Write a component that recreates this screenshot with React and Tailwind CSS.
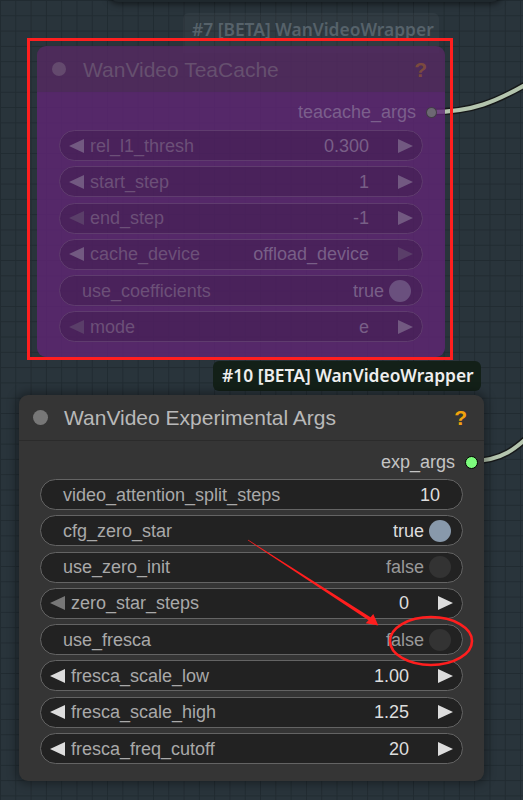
import React from "react";

// colour sets for the two node states
const dark = {
  node: "bg-[#353535] shadow-[0_0_10px_3px_rgba(0,0,0,0.35)]",
  head: "h-[46px] border-b border-[#2b2b2b] pl-[14px] pr-[17px] gap-[16px]",
  headBg: "",
  body: "pt-[6px]",
  dot: "h-[15px] w-[15px] bg-[#777777]",
  title: "text-[#b9b9b9]",
  help: "text-[#f2a30c]",
  outRow: "pr-[6px]",
  out: "text-[#c4c4c4]",
  slot: "h-[13px] w-[13px] border-[1.5px] border-black bg-[#7dfc7d]",
  list: "mt-[2px] px-[21px]",
  widget: "border-[#646464] bg-[#222222]",
  label: "text-[#a9a9a9]",
  value: "text-[#dddddd]",
  muted: "text-[#999999]",
  arrow: "#dddddd",
  arrowOff: "#777777",
  on: "bg-[#8899ab]",
  off: "bg-[#333333]",
};

const bypassed = {
  node: "",
  head: "h-[46px] pl-[15px] pr-[18px] gap-[17px]",
  headBg: "bg-[#562963]/80",
  body: "pt-[5px] bg-[#602676]/80",
  dot: "h-[14px] w-[14px] bg-[#644a6e]",
  title: "text-[#66506f]",
  help: "text-[#7b4a3e]",
  outRow: "pr-[8px]",
  out: "text-[#7b5f8c]",
  slot: "h-[11px] w-[11px] border border-black/40 bg-[#6d6873]",
  list: "mt-[3px] px-[22px]",
  widget: "border-[#5f3c6e] bg-black/[0.13]",
  label: "text-[#6c5078]",
  value: "text-[#785f87]",
  muted: "text-[#785f87]",
  arrow: "#725981",
  arrowOff: "#5a3e69",
  on: "bg-[#6a507e]",
  off: "bg-[#4a2b58]",
};

const teacache = [
  { kind: "num", label: "rel_l1_thresh", value: "0.300" },
  { kind: "num", label: "start_step", value: "1" },
  { kind: "num", label: "end_step", value: "-1", leftOff: true },
  { kind: "num", label: "cache_device", value: "offload_device", rightOff: true },
  { kind: "toggle", label: "use_coefficients", on: true },
  { kind: "num", label: "mode", value: "e", leftOff: true },
];

const expArgs = [
  { kind: "plain", label: "video_attention_split_steps", value: "10" },
  { kind: "toggle", label: "cfg_zero_star", on: true },
  { kind: "toggle", label: "use_zero_init", on: false },
  { kind: "num", label: "zero_star_steps", value: "0", leftOff: true },
  { kind: "toggle", label: "use_fresca", on: false },
  { kind: "num", label: "fresca_scale_low", value: "1.00" },
  { kind: "num", label: "fresca_scale_high", value: "1.25" },
  { kind: "num", label: "fresca_freq_cutoff", value: "20" },
];

function Arrow({ dir, color }) {
  return (
    <svg width="15" height="14" viewBox="0 0 15 14" className="block shrink-0">
      <polygon points={dir === "l" ? "15,0 15,14 0,7" : "0,0 0,14 15,7"} fill={color} />
    </svg>
  );
}

function Widget({ w, t }) {
  const pill = `flex h-[31px] shrink-0 items-center rounded-full border text-[18px] leading-none ${t.widget}`;

  if (w.kind === "num") {
    return (
      <div className={pill}>
        <span className="ml-[9px]">
          <Arrow dir="l" color={w.leftOff ? t.arrowOff : t.arrow} />
        </span>
        <span className={`ml-[6px] flex-1 whitespace-nowrap ${t.label}`}>{w.label}</span>
        <span className={`whitespace-nowrap ${t.value}`}>{w.value}</span>
        <span className="ml-[29px] mr-[9px]">
          <Arrow dir="r" color={w.rightOff ? t.arrowOff : t.arrow} />
        </span>
      </div>
    );
  }

  if (w.kind === "toggle") {
    return (
      <div className={pill}>
        <span className={`ml-[22px] flex-1 whitespace-nowrap ${t.label}`}>{w.label}</span>
        <span className={w.on ? t.value : t.muted}>{w.on ? "true" : "false"}</span>
        <span className={`ml-[5px] mr-[11px] h-[22px] w-[22px] rounded-full ${w.on ? t.on : t.off}`} />
      </div>
    );
  }

  return (
    <div className={pill}>
      <span className={`ml-[22px] flex-1 whitespace-nowrap ${t.label}`}>{w.label}</span>
      <span className={`mr-[22px] ${t.value}`}>{w.value}</span>
    </div>
  );
}

function Node({ t, title, output, widgets, className }) {
  return (
    <div className={`absolute flex flex-col overflow-hidden rounded-[9px] ${t.node} ${className}`}>
      <div className={`flex shrink-0 items-center ${t.head} ${t.headBg}`}>
        <span className={`shrink-0 rounded-full ${t.dot}`} />
        <span className={`text-[21px] leading-none whitespace-nowrap ${t.title}`}>{title}</span>
        <span className={`ml-auto text-[21px] font-bold leading-none ${t.help}`}>?</span>
      </div>
      <div className={`flex flex-1 flex-col ${t.body}`}>
        <div className={`flex h-[30px] shrink-0 items-center justify-end gap-[10px] ${t.outRow}`}>
          <span className={`text-[18px] leading-none ${t.out}`}>{output}</span>
          <span className={`shrink-0 rounded-full ${t.slot}`} />
        </div>
        <div className={`flex flex-col gap-[5.3px] ${t.list}`}>
          {widgets.map((w) => (
            <Widget key={w.label} w={w} t={t} />
          ))}
        </div>
      </div>
    </div>
  );
}

export default function App() {
  return (
    <div className="relative h-[800px] w-[523px] overflow-hidden bg-[#29343b] bg-[linear-gradient(#212b31_1px,transparent_1px),linear-gradient(90deg,#212b31_1px,transparent_1px)] bg-[size:15.3px_15.3px] font-['Liberation_Sans',Arial,sans-serif]">
      {/* node cut off at the top */}
      <div className="absolute -top-[20px] left-[110px] h-[22px] w-[390px] rounded-b-[8px] bg-[#1f282d] shadow-[0_0_6px_2px_rgba(0,0,0,0.55)]" />

      {/* links */}
      <svg className="pointer-events-none absolute inset-0" width="523" height="800">
        <path d="M431 112 C 470 112, 495 104, 540 76" fill="none" stroke="#111" strokeOpacity="0.8" strokeWidth="7" />
        <path d="M431 112 C 470 112, 495 104, 540 76" fill="none" stroke="#b4c5ae" strokeWidth="4" />
        <path d="M471 461 C 500 461, 515 452, 545 420" fill="none" stroke="#111" strokeOpacity="0.8" strokeWidth="7" />
        <path d="M471 461 C 500 461, 515 452, 545 420" fill="none" stroke="#b4c5ae" strokeWidth="4" />
      </svg>

      {/* badge of the bypassed node */}
      <div className="absolute left-[183px] top-[13px] flex h-[40px] w-[256px] items-start rounded-t-[6px] bg-white/[0.035] pl-[9px] pt-[8px]">
        <span className="font-['Noto_Sans',sans-serif] text-[17.4px] font-semibold leading-none whitespace-nowrap text-[#56626a]">
          #7 [BETA] WanVideoWrapper
        </span>
      </div>

      <Node
        t={bypassed}
        title="WanVideo TeaCache"
        output="teacache_args"
        widgets={teacache}
        className="left-[37px] top-[46px] h-[311px] w-[408px]"
      />

      {/* red frame drawn over the screenshot */}
      <div className="pointer-events-none absolute left-[27px] top-[38px] h-[322px] w-[426px] border-[3px] border-[#ff1f1f]" />

      <div className="absolute left-[213px] top-[361px] flex h-[30px] w-[268px] items-center rounded-[6px] bg-[#132018] pl-[9px]">
        <span className="font-['Noto_Sans',sans-serif] text-[17.4px] font-semibold leading-none whitespace-nowrap text-[#eeeeee]">
          #10 [BETA] WanVideoWrapper
        </span>
      </div>

      <Node
        t={dark}
        title="WanVideo Experimental Args"
        output="exp_args"
        widgets={expArgs}
        className="left-[19px] top-[395px] h-[386px] w-[465px]"
      />

      {/* annotation: arrow and circle */}
      <svg className="pointer-events-none absolute inset-0" width="523" height="800">
        <polygon
          points="248.2,539.7 370.5,617.2 373.3,614 378.3,625.5 365.7,623.3 368.5,620.2 247.8,540.3"
          fill="#ff1e1e"
        />
        <ellipse cx="431" cy="641" rx="41" ry="24" fill="none" stroke="#ff1e1e" strokeWidth="2.6" />
      </svg>
    </div>
  );
}
